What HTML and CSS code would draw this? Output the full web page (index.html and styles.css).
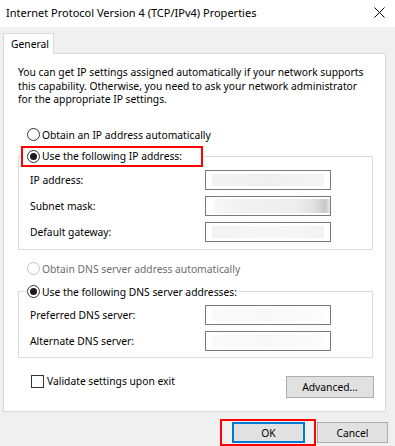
FILE: index.html
```html
<!DOCTYPE html>
<html lang="en">
<head>
<meta charset="utf-8">
<title>Internet Protocol Version 4 (TCP/IPv4) Properties</title>
<link rel="stylesheet" href="styles.css">
</head>
<body>
<div class="window">
  <div class="titlebar">
    <span class="title">Internet Protocol Version 4 (TCP/IPv4) Properties</span>
    <svg class="close" width="11" height="11" viewBox="0 0 11 11"><path d="M0.5 0.5 L10.5 10.5 M10.5 0.5 L0.5 10.5" stroke="#000" stroke-width="1" fill="none"/></svg>
  </div>
  <div class="body">
    <div class="tabs"><div class="tab">General</div></div>
    <div class="panel">
      <p class="intro">You can get IP settings assigned automatically if your network supports<br>this capability. Otherwise, you need to ask your network administrator<br>for the appropriate IP settings.</p>
      <div class="radio-row first"><span class="radio"></span><span>Obtain an IP address automatically</span></div>
      <fieldset class="group group-ip">
        <legend class="legend highlight"><span class="radio checked"></span><span>Use the following IP address:</span></legend>
        <div class="field"><span class="label">IP address:</span><span class="input"><span class="blur blur-a"></span></span></div>
        <div class="field"><span class="label">Subnet mask:</span><span class="input"><span class="blur blur-b"></span></span></div>
        <div class="field"><span class="label">Default gateway:</span><span class="input"><span class="blur blur-c"></span></span></div>
      </fieldset>
      <div class="radio-row disabled"><span class="radio"></span><span>Obtain DNS server address automatically</span></div>
      <fieldset class="group group-dns">
        <legend class="legend plain"><span class="radio checked"></span><span>Use the following DNS server addresses:</span></legend>
        <div class="field"><span class="label">Preferred DNS server:</span><span class="input"><span class="blur blur-d"></span></span></div>
        <div class="field"><span class="label">Alternate DNS server:</span><span class="input"><span class="blur blur-d"></span></span></div>
      </fieldset>
      <div class="bottom-row">
        <div class="check-row"><span class="checkbox"></span><span>Validate settings upon exit</span></div>
        <div class="btn adv">Advanced...</div>
      </div>
    </div>
    <div class="buttons">
      <div class="ok-wrap"><div class="btn ok">OK</div></div>
      <div class="btn cancel">Cancel</div>
    </div>
  </div>
</div>
</body>
</html>
```

FILE: styles.css
```css
* { box-sizing: border-box; }
html, body { margin: 0; padding: 0; }
body {
  width: 395px;
  height: 446px;
  overflow: hidden;
  font-family: "Noto Sans", "Liberation Sans", sans-serif;
  font-size: 10.3px;
  color: #000;
  background: #f0f0f0;
}
.window { width: 395px; height: 446px; display: flex; flex-direction: column; }
.titlebar {
  height: 27px;
  background: #fff;
  display: flex;
  align-items: center;
  padding: 0 0 3px 6px;
  font-size: 11px;
}
.title { white-space: nowrap; }
.close { margin-left: auto; margin-right: 10px; margin-top: 1px; display: block; }
.body {
  flex: 1;
  background: #f0f0f0;
  padding: 6px 0 0 3px;
}
.tabs { display: flex; }
.tab {
  position: relative;
  z-index: 1;
  width: 51px;
  height: 21px;
  margin-bottom: -1px;
  background: #fff;
  border: 1px solid #d9d9d9;
  border-bottom: none;
  padding: 2px 0 0 7px;
  line-height: 17px;
}
.panel {
  width: 383px;
  height: 359px;
  background: #fff;
  border: 1px solid #d9d9d9;
  padding: 12px 13px 0 14px;
}
.intro {
  margin: 0;
  line-height: 13.5px;
  white-space: nowrap;
}
.radio-row {
  display: flex;
  align-items: center;
  height: 14px;
  gap: 2px;
  margin-left: 9px;
  white-space: nowrap;
}
.radio-row.first { margin-top: 21px; }
.radio-row.disabled { margin-top: 12px; color: #6d6d6d; }
.radio {
  width: 13px;
  height: 13px;
  border-radius: 50%;
  border: 1px solid #333;
  background: #fff;
  display: inline-flex;
  align-items: center;
  justify-content: center;
  flex: none;
}
.radio.checked::after {
  content: "";
  width: 7px;
  height: 7px;
  border-radius: 50%;
  background: #1a1a1a;
}
.disabled .radio { border-color: #c2c2c2; }
.group {
  margin: 0;
  border: 1px solid #dcdcdc;
  width: 355px;
  min-width: 0;
}
.group-ip { margin-top: 4px; padding: 3px 0 7px 0; }
.group-dns { margin-top: 9px; padding: 6px 0 6px 0; }
.legend {
  display: flex;
  align-items: center;
  gap: 2px;
  white-space: nowrap;
}
.legend.highlight {
  margin-left: 2px;
  width: 182px;
  height: 21px;
  border: 2px solid #f00;
  padding: 0 0 0 4px;
}
.legend.plain {
  margin-left: 7px;
  height: 14px;
  padding: 0 1px;
}
.field {
  display: flex;
  align-items: center;
  height: 20px;
  padding-left: 11px;
}
.field + .field { margin-top: 6px; }
.label { width: 175px; white-space: nowrap; }
.input {
  width: 126px;
  height: 20px;
  border: 1px solid #7a7a7a;
  background: #fff;
  display: flex;
  align-items: center;
  padding: 0 6px;
}
.blur { display: block; height: 12px; flex: 1; }
.blur-a { background: linear-gradient(90deg, #f3f3f3, #efefef 50%, #f5f5f5 100%); }
.blur-b { background: linear-gradient(90deg, #f7f7f7, #f0f0f0 30%, #eeeeee 70%, #e2e2e2 85%, #c9c9c9 96%, #e8e8e8); margin-left: 2px; margin-right: -6px; height: 14px; }
.blur-c { background: linear-gradient(90deg, #f2f2f2, #f6f6f6 50%, #f3f3f3); }
.blur-d { background: linear-gradient(90deg, #fafafa, #f8f8f8 50%, #fbfbfb); }
.bottom-row {
  margin-top: 17px;
  margin-right: -2px;
  display: flex;
  justify-content: space-between;
  align-items: flex-start;
}
.check-row {
  display: flex;
  align-items: center;
  gap: 3px;
  margin-left: 13px;
  height: 13px;
  white-space: nowrap;
}
.checkbox {
  width: 13px;
  height: 13px;
  border: 1px solid #333;
  background: #fff;
  flex: none;
}
.btn {
  background: #e1e1e1;
  border: 1px solid #adadad;
  display: flex;
  align-items: center;
  justify-content: center;
  white-space: nowrap;
}
.adv { width: 88px; height: 22px; margin-top: 1px; }
.buttons {
  display: flex;
  justify-content: flex-end;
  align-items: center;
  margin-top: 7px;
  padding-right: 7px;
}
.ok-wrap {
  border: 2px solid #f00;
  padding: 1px 9px 1px 10px;
  margin-right: 1px;
}
.ok { width: 73px; height: 21px; border: 2px solid #0078d7; }
.cancel { width: 71px; height: 21px; }
```
